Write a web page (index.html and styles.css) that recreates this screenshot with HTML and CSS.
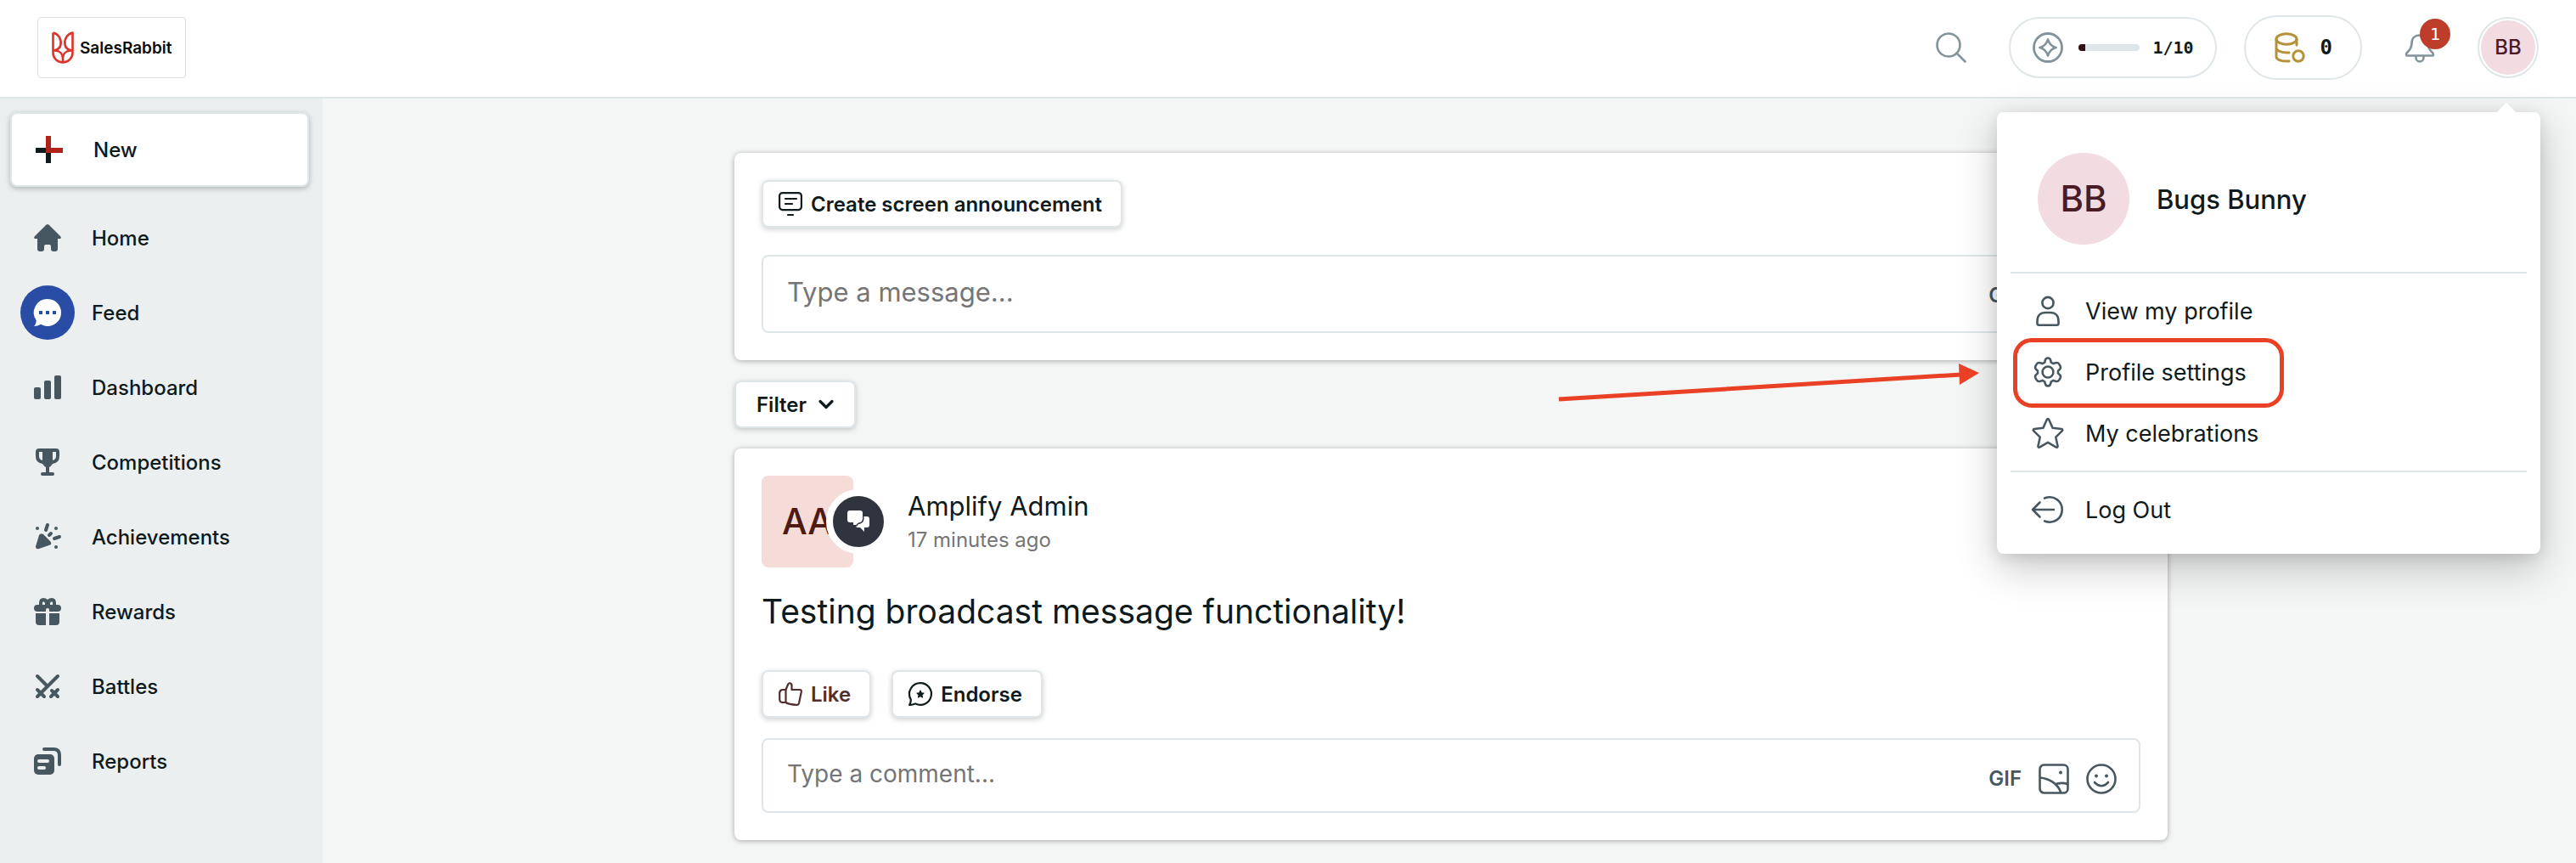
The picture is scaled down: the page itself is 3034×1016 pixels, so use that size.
FILE: index.html
```html
<!DOCTYPE html>
<html lang="en">
<head>
<meta charset="utf-8">
<meta name="viewport" content="width=device-width, initial-scale=1">
<title>SalesRabbit – Feed</title>
<link rel="stylesheet" href="styles.css">
</head>
<body>
<header class="topbar">
  <a class="brand" href="#" aria-label="SalesRabbit">
    <svg class="brand-mark" viewBox="0 0 26 38" fill="none" stroke="#dc352b" stroke-width="2.6" stroke-linejoin="round">
      <path d="M1.5 1.5V25a11.5 11.5 0 0 0 23 0V1.500C18 3 14.500 9 15.500 15.500C16 20 20 22 24.500 23M1.500 1.500C8 3 11.500 9 10.500 15.500C10 20 6 22 1.500 23"/>
      <path d="M4 22.500C9.500 23 13 26.500 13 31.500V36M22 22.500C16.500 23 13 26.500 13 31.500"/>
    </svg>
    <span>SalesRabbit</span>
  </a>
  <div class="top-actions">
    <button class="icon-button" type="button" aria-label="Search">
      <svg class="icon-36" viewBox="0 0 36 36" fill="none" stroke="#83939b" stroke-width="2.600" stroke-linecap="round"><circle cx="15" cy="15" r="13.500"/><path d="M24.500 24.500L34.500 34.500"/></svg>
    </button>
    <button class="pill pill-points" type="button">
      <svg class="icon-36" viewBox="0 0 36 36" fill="none" stroke="#83939b" stroke-width="2.800" stroke-linejoin="round"><circle cx="18" cy="18" r="16.500"/><path d="M18 8.500C19.500 14 22 16.500 27.500 18C22 19.500 19.500 22 18 27.500C16.500 22 14 19.500 8.500 18C14 16.500 16.500 14 18 8.500Z"/></svg>
      <span class="meter"><span class="meter-fill" style="width:10%"></span></span>
      <span class="points">1/10</span>
    </button>
    <button class="pill pill-coins" type="button">
      <svg class="icon-36" viewBox="0 0 36 36" fill="none" stroke="#b5913a" stroke-width="3" stroke-linecap="round"><ellipse cx="14" cy="8" rx="12" ry="6.200"/><path d="M2 8V29C2 32 8 34.500 17 34M26 8V15M2 18C2 22 9 24.500 17 24"/><circle cx="28" cy="28" r="6.200"/></svg>
      <span class="coins">0</span>
    </button>
    <button class="icon-button bell" type="button" aria-label="Notifications">
      <svg class="icon-36" viewBox="0 0 36 36" fill="none" stroke="#83939b" stroke-width="2.600" stroke-linejoin="round"><path d="M18 3.500C12 3.500 8.500 7.500 8.500 13C8.500 19 6 21 3.500 23.500C1.500 25.500 1.500 27.500 3.500 27.500H32.500C34.500 27.500 34.500 25.500 32.500 23.500C30 21 27.500 19 27.500 13C27.500 7.500 24 3.500 18 3.500Z"/><path d="M13.500 28V30a4.500 4.500 0 0 0 9 0V28"/></svg>
      <span class="bell-count">1</span>
    </button>
    <div class="account">
      <button class="account-button" type="button" aria-expanded="true"><span>BB</span></button>
      <div class="account-menu">
        <div class="profile">
          <span class="profile-avatar">BB</span>
          <span class="profile-name">Bugs Bunny</span>
        </div>
        <nav class="menu-group" aria-label="Account">
          <a class="menu-item" href="#">
            <svg class="icon-36" viewBox="0 0 36 36" fill="none" stroke="#47575f" stroke-width="2.600" stroke-linejoin="round"><circle cx="18" cy="8.500" r="6.600"/><path d="M15 20H21C27 20 30.500 24 30.500 30V33Q30.500 34.700 28.500 34.700H7.500Q5.500 34.700 5.500 33V30C5.500 24 9 20 15 20Z"/></svg>
            <span>View my profile</span>
          </a>
          <a class="menu-item highlighted" href="#">
            <svg class="icon-36" viewBox="0 0 24 24" fill="none" stroke="#47575f" stroke-width="1.700" stroke-linejoin="round"><path d="M9.800 3.100Q10.200 1 12 1Q13.800 1 14.200 3.100L14.500 4.400L16.300 5.400L17.900 4.800Q19.900 4.200 20.800 5.700L21.700 7.300Q22.500 8.900 21 10.100L20 11V13L21 13.900Q22.500 15.100 21.700 16.700L20.800 18.300Q19.900 19.800 17.900 19.200L16.300 18.600L14.500 19.600L14.200 20.900Q13.800 23 12 23Q10.200 23 9.800 20.900L9.500 19.600L7.700 18.600L6.100 19.200Q4.100 19.800 3.200 18.300L2.300 16.700Q1.500 15.100 3 13.900L4 13V11L3 10.100Q1.500 8.900 2.300 7.300L3.200 5.700Q4.100 4.200 6.100 4.800L7.700 5.400L9.500 4.400Z"/><circle cx="12" cy="12" r="4.300"/></svg>
            <span>Profile settings</span>
          </a>
          <a class="menu-item" href="#">
            <svg class="icon-36" viewBox="0 0 24 24" fill="none" stroke="#47575f" stroke-width="1.700" stroke-linejoin="round"><path d="M11.200 1.300Q12 -.1 12.800 1.300L15.700 7.900L22.700 8.700Q24.100 9 23.100 10.300L18.200 15.100L19.700 22.100Q19.700 23.600 18.300 22.900L12 19.200L5.700 22.900Q4.300 23.600 4.300 22.100L5.800 15.100L.9 10.300Q-.1 9 1.300 8.700L8.300 7.900Z"/></svg>
            <span>My celebrations</span>
          </a>
        </nav>
        <div class="menu-group">
          <a class="menu-item" href="#">
            <svg class="icon-36" viewBox="0 0 36 36" fill="none" stroke="#47575f" stroke-width="2.600" stroke-linecap="round" stroke-linejoin="round"><path d="M8.500 9.500L0 18L8.500 26.500M0 18H25M14 4.500C25 .5 34.700 7.500 34.700 18C34.700 28.500 25 35.500 14 31.500"/></svg>
            <span>Log Out</span>
          </a>
        </div>
        <svg class="pointer-arrow" viewBox="0 0 496 50" aria-hidden="true"><path d="M0 45L474 16" stroke="#ea4126" stroke-width="5"/><path d="M471 3L495 14L472 28Z" fill="#ea4126"/></svg>
      </div>
    </div>
  </div>
</header>

<div class="layout">
  <aside class="sidebar">
    <button class="new-button" type="button">
      <svg viewBox="0 0 32 32"><path d="M0 14h12v6H0zM12 20h6v12h-6z" fill="#0f1a1c"/><path d="M12 0h6v14h14v6H12z" fill="#b02318"/></svg>
      <span>New</span>
    </button>
    <nav class="side-nav" aria-label="Main">
      <a class="nav-link" href="#"><span class="nav-icon"><svg viewBox="0 0 32 32"><path d="M14.300.8Q16-.7 17.700.8L31 14Q33 16.500 30.500 17H28V29Q28 32 25 32H23Q20 32 20 29V26Q20 24 18 24H14Q12 24 12 26V29Q12 32 9 32H7Q4 32 4 29V17H1.500Q-1 16.500 1 14Z"/></svg></span><span>Home</span></a>
      <a class="nav-link active" href="#" aria-current="page"><span class="nav-icon"><svg viewBox="0 0 32 32"><path d="M16 0a16 16 0 1 1-8 29.800Q4.500 32 0 32Q3 29 2.600 25A16 16 0 0 1 16 0Z"/><path d="M6 14h4v4H6zM14 14h4v4h-4zM22 14h4v4h-4z" fill="#294da5"/></svg></span><span>Feed</span></a>
      <a class="nav-link" href="#"><span class="nav-icon"><svg viewBox="0 0 32 32"><rect y="16" width="8" height="14" rx="2"/><rect x="12" y="8" width="8" height="22" rx="2"/><rect x="24" y="2" width="8" height="28" rx="2"/></svg></span><span>Dashboard</span></a>
      <a class="nav-link" href="#"><span class="nav-icon"><svg viewBox="0 0 32 32"><path fill-rule="evenodd" d="M6 0H26Q30 0 30 4V9Q30 17 22 18Q20 21 18 22V28H22Q24 28 24 30T22 32H10Q8 32 8 30T10 28H14V22Q12 21 10 18Q2 17 2 9V4Q2 0 6 0ZM6 4V9Q6 13 10 14V4ZM22 4V14Q26 13 26 9V4Z"/></svg></span><span>Competitions</span></a>
      <a class="nav-link" href="#"><span class="nav-icon"><svg viewBox="0 0 32 32"><path d="M6 14Q8 11 11 13L19 21Q21.500 24 19 25.500L6 30Q2 31 2 27.500Z"/><circle cx="4" cy="6" r="2"/><circle cx="26" cy="6" r="2"/><circle cx="26" cy="28" r="2"/><path d="M16 2L14 8M20 12L18 14M30 16L24 18" stroke="#47575f" stroke-width="4" stroke-linecap="round"/></svg></span><span>Achievements</span></a>
      <a class="nav-link" href="#"><span class="nav-icon"><svg viewBox="0 0 32 32"><path fill-rule="evenodd" d="M6 8V6Q6 0 11 0Q14 0 16 2Q18 0 21 0Q26 0 26 6V8H28Q32 8 32 12T28 16H4Q0 16 0 12T4 8ZM10 8H13V6Q12 3.800 10.500 4.500Q9.500 5.500 10 8ZM19 8H22Q22.500 5.500 21.500 4.500Q20 3.800 19 6ZM14 14V16H18V14Q18 12 16 12T14 14Z"/><path d="M2 18H14V32H6Q2 32 2 28ZM18 18H30V28Q30 32 26 32H18Z"/></svg></span><span>Rewards</span></a>
      <a class="nav-link" href="#"><span class="nav-icon"><svg viewBox="0 0 32 32" fill="none" stroke="#47575f" stroke-width="4" stroke-linecap="round"><path d="M4 4L16 16M28 4L4 28M4 20L12 28M28 20L20 28M21 21L28 28"/></svg></span><span>Battles</span></a>
      <a class="nav-link" href="#"><span class="nav-icon"><svg viewBox="0 0 32 32"><rect y="8" width="24" height="24" rx="5"/><path d="M12 2H23Q30 2 30 9V20" fill="none" stroke="#47575f" stroke-width="4" stroke-linecap="round"/><rect x="4" y="14" width="14" height="4" rx="2" fill="#ebeff0"/><rect x="4" y="22" width="10" height="4" rx="2" fill="#ebeff0"/></svg></span><span>Reports</span></a>
    </nav>
  </aside>

  <main class="content">
    <div class="feed">
      <section class="card composer">
        <button class="button" type="button">
          <svg class="icon-28" viewBox="0 0 28 28" fill="none" stroke="#0f1a1c" stroke-width="2.200" stroke-linecap="round"><rect x="1.100" y="1.100" width="25.800" height="20" rx="3.500"/><path d="M8 8H21M8 14H16M11 27H17"/></svg>
          <span>Create screen announcement</span>
        </button>
        <div class="field">
          <textarea class="field-input large" rows="1" placeholder="Type a message..." aria-label="Message"></textarea>
          <div class="field-tools">
            <button class="tool gif" type="button">GIF</button>
            <button class="tool" type="button" aria-label="Add image"><svg class="icon-36" viewBox="0 0 36 36" fill="none" stroke="#47575f" stroke-width="2.600"><rect x="1.500" y="1.500" width="33" height="33" rx="5"/><path d="M1.500 16.500C13 17.500 23 24 26.500 34.500M19 24.500Q26 21.500 34.500 24"/><circle cx="26" cy="10.500" r="2" fill="#47575f" stroke="none"/></svg></button>
            <button class="tool" type="button" aria-label="Add emoji"><svg class="icon-36" viewBox="0 0 36 36" fill="none" stroke="#47575f" stroke-width="2.600" stroke-linecap="round"><circle cx="18" cy="18" r="16.500"/><path d="M10 22Q18 30.500 26 22"/><circle cx="12" cy="14.500" r="2" fill="#47575f" stroke="none"/><circle cx="24" cy="14.500" r="2" fill="#47575f" stroke="none"/></svg></button>
          </div>
        </div>
      </section>

      <button class="button filter" type="button">
        <span>Filter</span>
        <svg viewBox="0 0 18 12" fill="none" stroke="#0f1a1c" stroke-width="3.200" stroke-linecap="round" stroke-linejoin="round"><path d="M2 2.500L9 9.500L16 2.500"/></svg>
      </button>

      <article class="card post">
        <header class="post-head">
          <div class="post-avatar">
            <span>AA</span>
            <span class="post-badge"><svg viewBox="0 0 26 26" fill="#fff"><path d="M17 7H23Q26 7 26 10V17Q26 20 23 20H20V25L15 20H12Q10 20 10 18V12Z"/><path d="M3 0H15Q18 0 18 3V10Q17.500 14 13 14.500Q11.500 15 10.500 17H7V14H3Q0 14 0 11V3Q0 0 3 0Z" stroke="#2f343e" stroke-width="3" paint-order="stroke"/></svg></span>
          </div>
          <div>
            <h2 class="post-author">Amplify Admin</h2>
            <p class="post-time">17 minutes ago</p>
          </div>
        </header>
        <p class="post-text">Testing broadcast message functionality!</p>
        <div class="post-actions">
          <button class="button like" type="button">
            <svg class="icon-28" viewBox="0 0 28 28" fill="none" stroke="#512e2d" stroke-width="2.200" stroke-linejoin="round"><path d="M8.500 9L11 3Q11.500 1 13.500 1.300Q16 2 15.500 5V9H25Q27.200 9.200 26.800 11.500L24 25Q23.500 27 21.500 26.800Q12 26.500 8.500 24V9H4.500Q1.200 9.500 1.200 13V20Q1.200 24 5 24H8.500"/></svg>
            <span>Like</span>
          </button>
          <button class="button" type="button">
            <svg class="icon-28" viewBox="0 0 28 28" fill="none" stroke="#0f1a1c" stroke-width="2.200" stroke-linejoin="round"><path d="M14 1.100A12.900 12.900 0 1 1 8 25.400Q5 27 1.100 26.900Q3 24 2.800 20.500A12.900 12.900 0 0 1 14 1.100Z"/><path d="M14 10L15.200 12.800L18 13L15.900 15L16.500 18L14 16.500L11.500 18L12.100 15L10 13L12.800 12.800Z" fill="#0f1a1c" stroke-width="1.200"/></svg>
            <span>Endorse</span>
          </button>
        </div>
        <div class="field">
          <textarea class="field-input" rows="1" placeholder="Type a comment..." aria-label="Comment"></textarea>
          <div class="field-tools">
            <button class="tool gif" type="button">GIF</button>
            <button class="tool" type="button" aria-label="Add image"><svg class="icon-36" viewBox="0 0 36 36" fill="none" stroke="#47575f" stroke-width="2.600"><rect x="1.500" y="1.500" width="33" height="33" rx="5"/><path d="M1.500 16.500C13 17.500 23 24 26.500 34.500M19 24.500Q26 21.500 34.500 24"/><circle cx="26" cy="10.500" r="2" fill="#47575f" stroke="none"/></svg></button>
            <button class="tool" type="button" aria-label="Add emoji"><svg class="icon-36" viewBox="0 0 36 36" fill="none" stroke="#47575f" stroke-width="2.600" stroke-linecap="round"><circle cx="18" cy="18" r="16.500"/><path d="M10 22Q18 30.500 26 22"/><circle cx="12" cy="14.500" r="2" fill="#47575f" stroke="none"/><circle cx="24" cy="14.500" r="2" fill="#47575f" stroke="none"/></svg></button>
          </div>
        </div>
      </article>
    </div>
  </main>
</div>
</body>
</html>
```
FILE: styles.css
```css
*, *::before, *::after { box-sizing: border-box; }

body {
  display: flex;
  flex-direction: column;
  min-height: 100vh;
  margin: 0;
  background: #f4f6f6;
  color: #0f1a1c;
  font-family: Inter, "Open Sans", sans-serif;
  font-size: 24px;
}

h2, p { margin: 0; }
a { color: inherit; text-decoration: none; }
svg { display: block; flex: none; overflow: visible; }

button {
  margin: 0;
  padding: 0;
  border: 0;
  background: none;
  color: inherit;
  font: inherit;
  cursor: pointer;
}

.icon-28 { width: 28px; height: 28px; }
.icon-36 { width: 36px; height: 36px; }

/* Top bar */
.topbar {
  display: flex;
  align-items: center;
  justify-content: space-between;
  padding: 18px 44px 20px;
  border-bottom: 2px solid #dfe6e9;
  background: #fff;
}

.brand {
  display: flex;
  align-items: center;
  gap: 7px;
  height: 72px;
  padding: 0 15px 0 16px;
  border: 1px solid #dcdedf;
  border-radius: 4px;
  color: #0a0a0a;
  font-size: 19px;
  font-weight: 600;
}
.brand-mark { width: 26px; height: 38px; }

.top-actions { display: flex; align-items: center; gap: 32px; }
.icon-button { position: relative; padding: 0 18px; }

.pill {
  display: flex;
  align-items: center;
  gap: 18px;
  border: 2px solid #dfe6e9;
  border-radius: 38px;
  font-family: "DejaVu Sans Mono", monospace;
  font-weight: 700;
}
.pill-points { height: 72px; padding: 0 25px 0 26px; }
.pill-coins { height: 76px; padding: 0 33px 0 34px; }
.points { margin-left: -3px; font-size: 20px; }

.meter {
  width: 72px;
  height: 8px;
  border-radius: 4px;
  background: #dfe6e9;
  overflow: hidden;
}
.meter-fill { display: block; height: 100%; background: #330f14; }

.bell-count {
  position: absolute;
  top: -16px;
  right: 0;
  width: 36px;
  height: 36px;
  border-radius: 50%;
  background: #bd3d2a;
  color: #fff;
  font-family: "DejaVu Sans Mono", monospace;
  font-size: 20px;
  line-height: 36px;
  text-align: center;
}

.account { position: relative; }
.account-button {
  display: block;
  width: 72px;
  height: 72px;
  padding: 2px;
  border: 2px solid #dfe6e9;
  border-radius: 50%;
}
.account-button span {
  display: block;
  border-radius: 50%;
  background: #f2dbe1;
  color: #4a1c26;
  font-weight: 500;
  line-height: 64px;
}

/* Account menu */
.account-menu {
  position: absolute;
  top: 112px;
  right: -2px;
  z-index: 10;
  width: 640px;
  padding: 0 16px 8px;
  border-radius: 8px;
  background: #fff;
  box-shadow: 0 16px 48px rgba(0, 0, 0, .22), 0 4px 16px rgba(0, 0, 0, .1);
}
.account-menu::before {
  content: "";
  position: absolute;
  top: -11px;
  right: 28px;
  border: 12px solid transparent;
  border-top: 0;
  border-bottom-color: #fff;
}
.profile {
  display: flex;
  align-items: center;
  gap: 32px;
  padding: 48px 32px 32px;
}
.profile-avatar {
  width: 108px;
  border-radius: 50%;
  background: #f2dbe1;
  color: #4a1c26;
  font-size: 42px;
  font-weight: 500;
  line-height: 108px;
  text-align: center;
}
.profile-name { font-size: 31px; font-weight: 500; }

.menu-group { padding: 8px 0; border-top: 2px solid #dfe6e9; }
.menu-item {
  position: relative;
  display: flex;
  align-items: center;
  gap: 26px;
  height: 72px;
  padding: 0 26px;
  font-size: 27px;
}
.menu-item.highlighted::after {
  content: "";
  position: absolute;
  top: -4px;
  left: 3px;
  width: 319px;
  height: 82px;
  border: 5px solid #ea4126;
  border-radius: 22px;
}
.pointer-arrow {
  position: absolute;
  top: 293px;
  right: 660px;
  width: 496px;
  height: 50px;
}

/* Page body */
.layout { display: flex; flex: 1; }

.sidebar {
  flex: none;
  width: 380px;
  padding: 16px 16px 16px 12px;
  background: #ebeff0;
  font-weight: 500;
}
.new-button {
  display: flex;
  align-items: center;
  gap: 36px;
  width: 100%;
  height: 88px;
  margin-bottom: 16px;
  padding: 0 28px;
  border: 2px solid #dfe6e9;
  border-radius: 8px;
  background: #fff;
  box-shadow: 0 2px 6px rgba(0, 0, 0, .25);
  font-weight: 500;
}
.new-button svg { width: 32px; height: 32px; }

.nav-link {
  display: flex;
  align-items: center;
  gap: 20px;
  height: 88px;
  padding-left: 12px;
}
.nav-icon {
  display: grid;
  place-items: center;
  width: 64px;
  height: 64px;
  border-radius: 50%;
}
.nav-icon svg { width: 32px; height: 32px; }
.nav-icon svg:not([fill]) { fill: #47575f; }
.active .nav-icon { background: #294da5; }
.active .nav-icon svg:not([fill]) { fill: #fff; }

.content {
  flex: 1;
  min-width: 0;
  padding: 64px 20px 24px 24px;
}
.feed {
  display: flex;
  flex-direction: column;
  align-items: flex-start;
  gap: 24px;
  max-width: 1688px;
  margin: 0 auto;
}

.card {
  width: 100%;
  padding: 32px;
  border-radius: 8px;
  background: #fff;
  box-shadow: 0 1px 6px rgba(0, 0, 0, .32);
}
.composer { display: flex; flex-direction: column; align-items: flex-start; gap: 32px; }

.button {
  display: flex;
  align-items: center;
  gap: 10px;
  height: 56px;
  padding: 0 22px 0 18px;
  border: 2px solid #dfe6e9;
  border-radius: 8px;
  background: #fff;
  box-shadow: 0 2px 6px rgba(0, 0, 0, .2);
  font-weight: 600;
}
.filter { gap: 14px; padding: 0 24px; }
.filter svg { width: 18px; height: 12px; }
.like { color: #512e2d; }

.field {
  display: flex;
  align-items: flex-start;
  width: 100%;
  border: 2px solid #dfe6e9;
  border-radius: 8px;
}
.field-input {
  flex: 1;
  min-width: 0;
  height: 84px;
  padding: 20px 0 20px 28px;
  border: 0;
  outline: 0;
  background: none;
  color: inherit;
  font: inherit;
  font-size: 28px;
  line-height: 40px;
  resize: none;
  overflow: hidden;
}
.field-input.large { height: 88px; padding-top: 22px; font-size: 31px; }
.field-input::placeholder { color: #757575; }

.field-tools {
  display: flex;
  align-items: center;
  gap: 20px;
  padding: 28px 26px 0 0;
}
.gif { color: #47575f; font-weight: 600; line-height: 36px; }

/* Post */
.post-head { display: flex; align-items: center; gap: 64px; }
.post-avatar {
  position: relative;
  width: 108px;
  border-radius: 8px;
  background: #f5dcd9;
  color: #4d1a14;
  font-size: 42px;
  font-weight: 500;
  line-height: 108px;
  text-align: center;
}
.post-badge {
  position: absolute;
  top: 16px;
  right: -44px;
  display: grid;
  place-items: center;
  width: 76px;
  height: 76px;
  border: 8px solid #fff;
  border-radius: 50%;
  background: #2f343e;
}
.post-badge svg { width: 26px; height: 26px; }
.post-author { font-size: 31px; font-weight: 400; line-height: 44px; }
.post-time { color: #757575; line-height: 36px; }
.post-text {
  margin: 28px 0 45px;
  font-size: 39px;
  line-height: 48px;
}
.post-actions { display: flex; gap: 24px; margin-bottom: 24px; }
```
